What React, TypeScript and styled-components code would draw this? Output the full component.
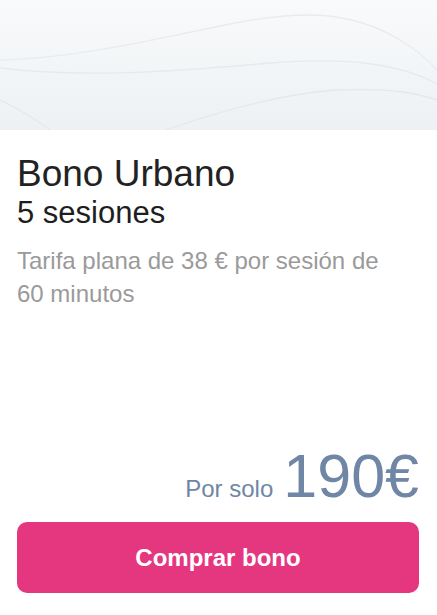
import React from "react";
import styled, { createGlobalStyle } from "styled-components";

const GlobalStyle = createGlobalStyle`
  html, body {
    margin: 0;
    padding: 0;
    background: #ffffff;
  }
  body {
    font-family: "Liberation Sans", Arial, sans-serif;
  }
`;

const Card = styled.div`
  display: flex;
  flex-direction: column;
  width: 437px;
  height: 615px;
  background: #ffffff;
  overflow: hidden;
`;

const Hero = styled.div`
  height: 130px;
  background: linear-gradient(180deg, #f9fafb 0%, #f2f5f7 55%, #edf1f4 100%);
  flex-shrink: 0;
`;

const Body = styled.div`
  flex: 1;
  display: flex;
  flex-direction: column;
  padding: 0 18px 22px 17px;
`;

const Title = styled.h2`
  margin: 23px 0 0;
  font-size: 37px;
  font-weight: 400;
  line-height: 42px;
  color: #222222;
`;

const Subtitle = styled.h3`
  margin: 0;
  font-size: 31px;
  font-weight: 400;
  line-height: 36px;
  color: #1e1e1e;
`;

const Description = styled.p`
  margin: 13px 0 0;
  padding-right: 30px;
  font-size: 24px;
  line-height: 33px;
  color: #9a9a9a;
`;

const Spacer = styled.div`
  flex: 1;
`;

const PriceRow = styled.div`
  display: flex;
  justify-content: flex-end;
  align-items: baseline;
  gap: 10px;
  color: #6f86a5;
`;

const PriceLabel = styled.span`
  font-size: 24px;
  line-height: 1;
`;

const PriceValue = styled.span`
  font-size: 61px;
  line-height: 60px;
`;

const BuyButton = styled.button`
  margin-top: 16px;
  height: 71px;
  width: 100%;
  border: none;
  border-radius: 10px;
  background: #e5377f;
  color: #ffffff;
  font-family: "Liberation Sans", Arial, sans-serif;
  font-size: 24px;
  font-weight: 700;
  cursor: pointer;
`;

const Waves = () => (
  <svg width="437" height="130" viewBox="0 0 437 130" style={{ display: "block" }}>
    <path
      d="M0 60 C 80 58, 160 38, 230 24 C 300 10, 350 10, 400 40 C 420 52, 430 62, 437 70"
      fill="none"
      stroke="#e8ecef"
      strokeWidth="1.3"
    />
    <path
      d="M0 68 C 80 78, 170 72, 270 63 C 350 57, 400 64, 437 84"
      fill="none"
      stroke="#e6eaee"
      strokeWidth="1.3"
    />
    <path
      d="M0 100 C 20 110, 40 122, 50 130"
      fill="none"
      stroke="#e4e8ec"
      strokeWidth="1.3"
    />
    <path
      d="M165 130 C 230 108, 290 92, 340 90 C 395 88, 420 94, 437 100"
      fill="none"
      stroke="#e4e8ec"
      strokeWidth="1.3"
    />
  </svg>
);

export default function App() {
  return (
    <>
      <GlobalStyle />
      <Card>
        <Hero>
          <Waves />
        </Hero>
        <Body>
          <Title>Bono Urbano</Title>
          <Subtitle>5 sesiones</Subtitle>
          <Description>Tarifa plana de 38 € por sesión de 60 minutos</Description>
          <Spacer />
          <PriceRow>
            <PriceLabel>Por solo</PriceLabel>
            <PriceValue>190€</PriceValue>
          </PriceRow>
          <BuyButton>Comprar bono</BuyButton>
        </Body>
      </Card>
    </>
  );
}
